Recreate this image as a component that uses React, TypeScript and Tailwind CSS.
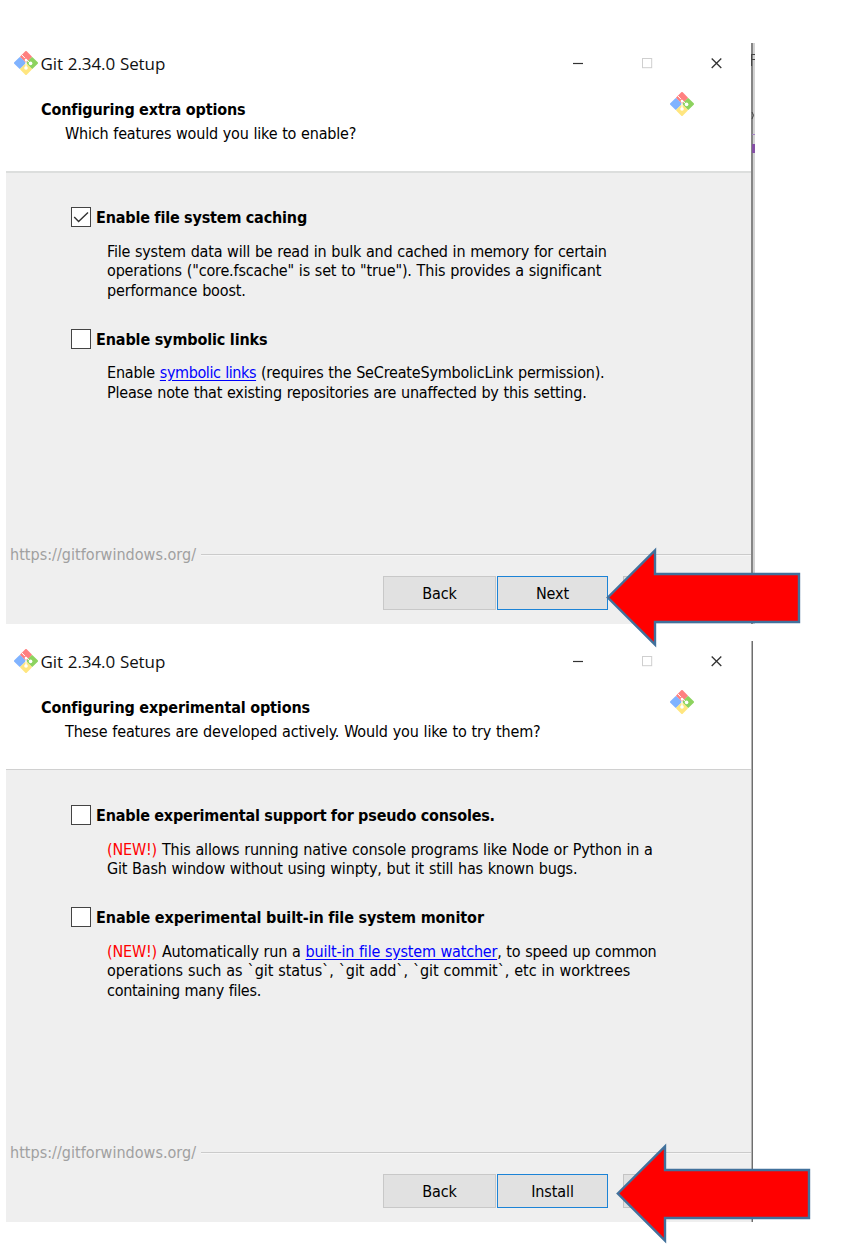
import type { ReactNode } from "react";

function GitLogo() {
  return (
    <svg width="24" height="24" viewBox="0 0 24 24" className="shrink-0">
      <g strokeWidth="2" strokeLinejoin="round">
        <path d="M12 1 L16.9 5.9 L12 10.8 L7.1 5.9 Z" fill="#ff8080" stroke="#ff8080" />
        <path d="M5.9 7.1 L10.6 12 L5.9 16.9 L1 12 Z" fill="#80b3ff" stroke="#80b3ff" />
        <path d="M18.1 7.1 L23 12 L18.1 16.9 L13.4 12 Z" fill="#8dd35f" stroke="#8dd35f" />
        <path d="M12 13.4 L16.9 18.1 L12 23 L7.1 18.1 Z" fill="#ffe680" stroke="#ffe680" />
      </g>
      <path d="M8 4 L11 7.2 M12.3 8.5 L17 13 M12 8 V17.5" fill="none" stroke="#fff" strokeWidth="1" />
      <circle cx="12" cy="9" r="1.3" fill="#fff" />
      <circle cx="16.6" cy="12.4" r="1.8" fill="#fff" />
      <circle cx="12" cy="17" r="1.8" fill="#fff" />
    </svg>
  );
}

function TitleBar() {
  return (
    <div className="flex h-[42px] shrink-0 items-start pl-2">
      <div className="pt-2">
        <GitLogo />
      </div>
      <div className="ml-[2.5px] w-[532.5px] pt-[9px] font-['Open_Sans',sans-serif] text-[17px] leading-6 tracking-[-0.1px] text-[#111] [word-spacing:0.6px]">
        Git 2.34.0 Setup
      </div>
      <svg width="10" height="11" viewBox="0 0 10 11" className="mt-[15px]">
        <path d="M0 5.5 H10" stroke="#333" strokeWidth="1.2" />
      </svg>
      <svg width="11" height="11" viewBox="0 0 11 11" className="ml-[59px] mt-[15px]">
        <rect x="0.5" y="0.5" width="9.2" height="9.2" fill="none" stroke="#cfcfcf" />
      </svg>
      <svg width="11" height="11" viewBox="0 0 11 11" className="ml-[57.5px] mt-[15px]">
        <path d="M0.7 0.5 L10.3 10 M10.3 0.5 L0.7 10" stroke="#333" strokeWidth="1.3" />
      </svg>
    </div>
  );
}

function Header({ title, subtitle }: { title: ReactNode; subtitle: ReactNode }) {
  return (
    <div className="flex h-[86px] shrink-0 justify-between pl-[35px] pr-[57px]">
      <div className="pt-[13px] leading-6">
        <div className="font-bold [word-spacing:-0.3px]">{title}</div>
        <div className="pl-[24px]">{subtitle}</div>
      </div>
      <div className="pt-[7px]">
        <GitLogo />
      </div>
    </div>
  );
}

function Option({ checked, label, children }: { checked?: boolean; label: ReactNode; children: ReactNode }) {
  return (
    <div className="pl-[65px]">
      <div className="flex h-[21px] items-start">
        <div className="h-5 w-5 border-[1.5px] border-[#444] bg-white">
          {checked && (
            <svg width="18" height="18" viewBox="0 0 18 18">
              <path d="M2.2 9 L6.6 13.6 L16 4.4" fill="none" stroke="#333" strokeWidth="1.4" />
            </svg>
          )}
        </div>
        <div className="ml-[5px] pt-[1px] font-bold leading-5 [word-spacing:-0.3px]">{label}</div>
      </div>
      <div className="mt-[13.5px] pl-[36px] leading-[19.6px]">{children}</div>
    </div>
  );
}

function Footer({ button }: { button: string }) {
  return (
    <div className="mt-auto">
      <div className="flex h-5 items-center pl-[4px]">
        <span className="leading-5 tracking-[0.03px] text-[#a0a0a0]">https://gitforwindows.org/</span>
        <div className="ml-[5px] h-[2px] flex-1 border-b border-t border-b-[#f6f6f6] border-t-[#cbcbcb]" />
      </div>
      <div className="mt-[11px] flex h-[34px] pl-[377px] text-center leading-[33px]">
        <div className="w-[113px] border border-[#c8c8c8] bg-[#e1e1e1] tracking-[-0.1px]">Back</div>
        <div className="ml-[1px] w-[111px] border border-[#1c83d6] bg-[#e1e1e1] tracking-[-0.1px]">{button}</div>
        <div className="ml-[15px] w-[112px] border border-[#c4c4c4] bg-[#e1e1e1]" />
      </div>
    </div>
  );
}

function Arrow() {
  return (
    <svg width="196" height="104" viewBox="0 0 196 104">
      <path d="M2.8 51.5 L50 4.5 V28 H194 V76 H50 V98.5 Z" fill="#ff0000" stroke="#41719c" strokeWidth="2.4" />
    </svg>
  );
}

export default function App() {
  return (
    <div className="relative h-[1248px] w-[852px] overflow-hidden whitespace-pre bg-white pl-[6px] pt-[43px] font-['DejaVu_Sans_Condensed','DejaVu_Sans',sans-serif] text-[16px] text-black [word-spacing:0.45px]">
      <div className="flex h-[581px]">
        <div className="flex w-[745px] flex-col bg-white">
          <TitleBar />
          <Header
            title={<span className="tracking-[-0.135px]">Configuring extra options</span>}
            subtitle={<span className="tracking-[-0.19px]">Which features would you like to enable?</span>}
          />
          <div className="flex flex-1 flex-col border-t-2 border-[#dcdedd] bg-[#efefef] pb-[14px] pt-[34px]">
            <Option checked label={<span className="tracking-[-0.17px]">Enable file system caching</span>}>
              <div className="tracking-[-0.2px]">File system data will be read in bulk and cached in memory for certain</div>
              <div className="tracking-[-0.17px]">operations ("core.fscache" is set to "true"). This provides a significant</div>
              <div className="tracking-[-0.17px]">performance boost.</div>
            </Option>
            <div className="h-[28.3px]" />
            <Option label={<span className="tracking-[-0.12px]">Enable symbolic links</span>}>
              <div className="tracking-[-0.19px]">
                <span className="tracking-[-0.18px]">Enable </span>
                <span className="tracking-[-0.4px] text-[#0000ff] underline underline-offset-2">symbolic links</span>
                {" (requires the SeCreateSymbolicLink permission)."}
              </div>
              <div className="tracking-[-0.205px]">Please note that existing repositories are unaffected by this setting.</div>
            </Option>
            <Footer button="Next" />
          </div>
        </div>
        <svg width="4" height="581" viewBox="0 0 4 581">
          <rect width="4" height="581" fill="#d2d2d2" />
          <rect width="2" height="581" fill="#858585" />
          <path d="M0.5 11 V23 M0.5 11.5 H4 M0.5 16.5 H4" stroke="#444" strokeWidth="1.2" fill="none" />
          <path d="M1 69 Q4 72 1 76" stroke="#444" strokeWidth="1" fill="none" />
          <path d="M1 91.5 H4" stroke="#a582c4" strokeWidth="1" />
          <rect x="1" y="101" width="3" height="9" fill="#8550a5" />
        </svg>
      </div>

      <div className="mt-[17px] flex h-[581px]">
        <div className="flex w-[744.5px] flex-col bg-white">
          <TitleBar />
          <Header
            title={<span className="tracking-[-0.12px]">Configuring experimental options</span>}
            subtitle={<span className="tracking-[-0.145px]">These features are developed actively. Would you like to try them?</span>}
          />
          <div className="flex flex-1 flex-col border-t border-[#d0d0d0] bg-[#efefef] pb-[14px] pt-[35px]">
            <Option label={<span className="tracking-[-0.18px]">Enable experimental support for pseudo consoles.</span>}>
              <div className="tracking-[-0.175px]">
                <span className="text-[#ff0000]">(NEW!)</span> This allows running native console programs like Node or Python in a
              </div>
              <div className="tracking-[-0.185px]">Git Bash window without using winpty, but it still has known bugs.</div>
            </Option>
            <div className="h-[28.4px]" />
            <Option label={<span className="tracking-[-0.095px]">Enable experimental built-in file system monitor</span>}>
              <div className="tracking-[-0.21px]">
                <span className="tracking-[-0.175px]">
                  <span className="text-[#ff0000]">(NEW!)</span> Automatically run a{" "}
                </span>
                <span className="tracking-[-0.205px] text-[#0000ff] underline underline-offset-2">built-in file system watcher</span>
                , to speed up common
              </div>
              <div className="tracking-[-0.06px]">operations such as `git status`, `git add`, `git commit`, etc in worktrees</div>
              <div className="tracking-[-0.285px]">containing many files.</div>
            </Option>
            <Footer button="Install" />
          </div>
        </div>
        <div className="w-[2px] border-r border-[#6e6e6e] bg-[#b4b4b4]" />
      </div>

      <div className="absolute left-[605px] top-[546px]">
        <Arrow />
      </div>
      <div className="absolute left-[615px] top-[1142px]">
        <Arrow />
      </div>
    </div>
  );
}
